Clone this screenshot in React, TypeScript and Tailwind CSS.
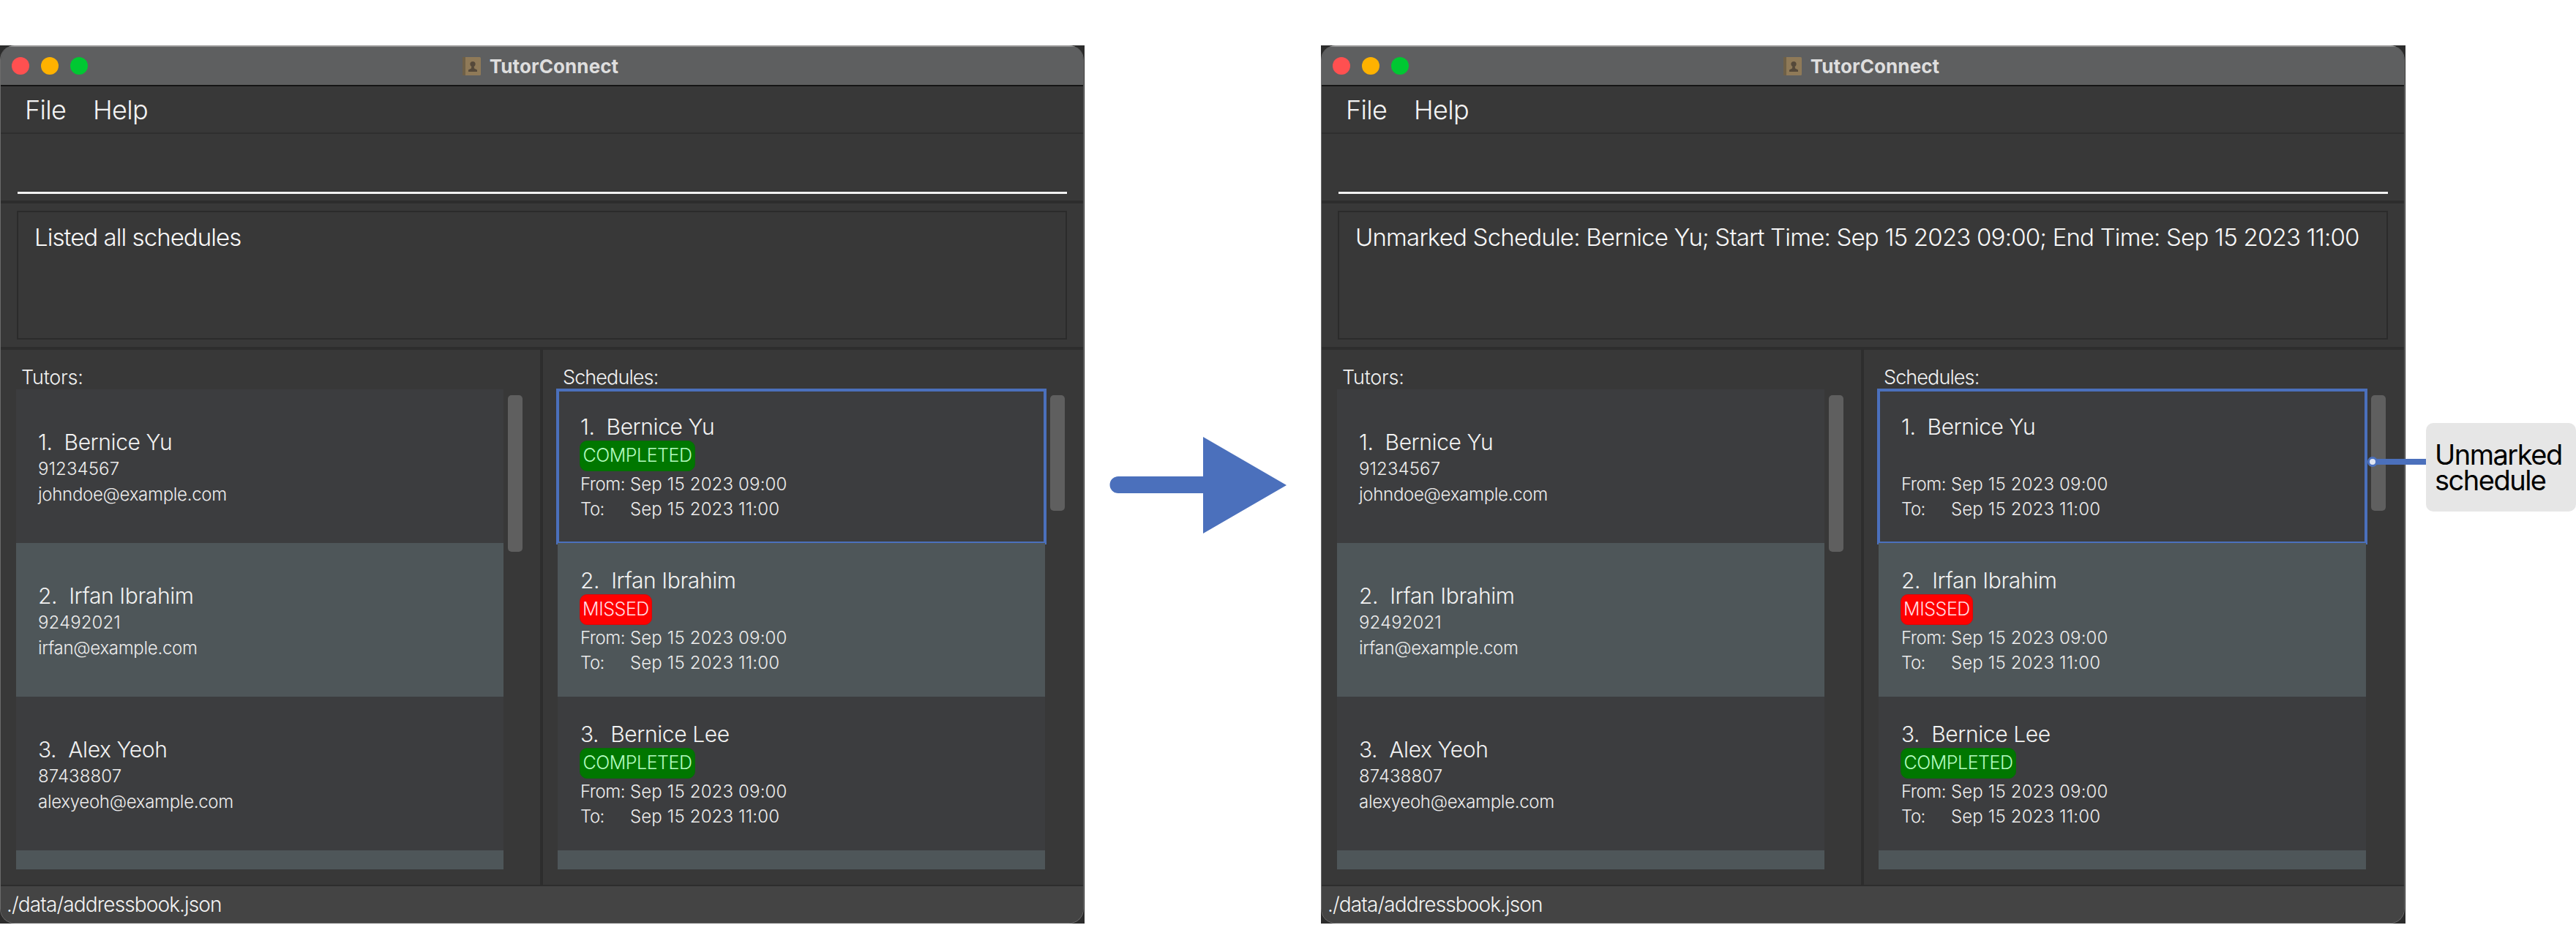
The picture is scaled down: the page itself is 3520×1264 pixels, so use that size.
const FONT = "font-['Inter','Liberation_Sans',sans-serif]";

type Tutor = { name: string; phone: string; email: string };
type Sched = { name: string; status: "COMPLETED" | "MISSED" | "" };

const tutors: Tutor[] = [
  { name: "1.\u00a0\u00a0Bernice Yu", phone: "91234567", email: "johndoe@example.com" },
  { name: "2.\u00a0\u00a0Irfan Ibrahim", phone: "92492021", email: "irfan@example.com" },
  { name: "3.\u00a0\u00a0Alex Yeoh", phone: "87438807", email: "alexyeoh@example.com" },
];

function Lights() {
  return (
    <div className="flex gap-4 pl-[15px]">
      <span className="w-6 h-6 rounded-full bg-[#ff5050]" />
      <span className="w-6 h-6 rounded-full bg-[#ffb200]" />
      <span className="w-6 h-6 rounded-full bg-[#00c832]" />
    </div>
  );
}

function AppIcon() {
  return (
    <svg width="25" height="25" viewBox="0 0 25 25" className="shrink-0">
      <rect width="25" height="25" rx="1.5" fill="#8f7a58" />
      <rect width="4" height="25" fill="#6f6047" />
      <circle cx="14" cy="9.5" r="3.6" fill="#55493a" />
      <path d="M12.5 12h3l.6 3.4 3.9 2.1V20H8v-2.5l3.9-2.1z" fill="#55493a" />
    </svg>
  );
}

function TutorCard({ t, i }: { t: Tutor; i: number }) {
  return (
    <div className={`h-[210px] shrink-0 pl-[30px] pt-[54px] ${i % 2 ? "bg-[#4e5659]" : "bg-[#3c3d3f]"}`}>
      <div className="h-9 text-[30px] leading-9 font-light tracking-[-0.4px] text-[#f2f2f2]">{t.name}</div>
      <div className="mt-[1px] h-[35px] text-[24px] leading-[35px] font-light tracking-[0.1px] text-[#ececec]">{t.phone}</div>
      <div className="h-[35px] text-[24px] leading-[35px] font-light tracking-[-0.3px] text-[#ececec]">{t.email}</div>
    </div>
  );
}

function SchedCard({ s, i, selected }: { s: Sched; i: number; selected: boolean }) {
  return (
    <div className={`relative h-[210px] shrink-0 pl-[31px] pt-[33px] ${i % 2 ? "bg-[#4e5659]" : "bg-[#3c3d3f]"}`}>
      <div className="h-9 text-[30px] leading-9 font-light tracking-[-0.4px] text-[#f2f2f2]">{s.name}</div>
      <div className="h-[42px] mt-[1px]">
        {s.status === "COMPLETED" && (
          <span className="inline-flex h-[42px] w-[158px] items-center justify-center rounded-[10px] -ml-[1px] border border-[#0a6a0a] bg-[#007700] text-[25px] font-light tracking-[-0.45px] text-[#b4fbc0]">
            COMPLETED
          </span>
        )}
        {s.status === "MISSED" && (
          <span className="inline-flex h-[42px] w-[99px] items-center justify-center rounded-[10px] -ml-[1px] border border-[#d80808] bg-[#ff0000] text-[25px] font-light tracking-[-0.45px] text-[#ffdce0]">
            MISSED
          </span>
        )}
      </div>
      <div className="mt-[1px] flex h-[34px] text-[24px] leading-[34px] font-light text-[#ececec]">
        <span className="w-[68px] tracking-[-0.5px]">From:</span>
        <span className="tracking-[0.15px]">Sep 15 2023 09:00</span>
      </div>
      <div className="flex h-[34px] text-[24px] leading-[34px] font-light text-[#ececec]">
        <span className="w-[68px] tracking-[-0.5px]">To:</span>
        <span className="tracking-[0.15px]">Sep 15 2023 11:00</span>
      </div>
      {selected && <div className="absolute -inset-x-[2px] -top-[1px] -bottom-[2px] border-4 border-[#4b70bc]" />}
    </div>
  );
}

function Window({ result, resultClass, firstStatus }: { result: string; resultClass: string; firstStatus: Sched["status"] }) {
  const scheds: Sched[] = [
    { name: "1.\u00a0\u00a0Bernice Yu", status: firstStatus },
    { name: "2.\u00a0\u00a0Irfan Ibrahim", status: "MISSED" },
    { name: "3.\u00a0\u00a0Bernice Lee", status: "COMPLETED" },
  ];
  return (
    <div className="w-[1482px] h-[1200px] shrink-0 bg-[#2c2c2c]">
      <div className="flex flex-col h-full w-[1481px] rounded-[20px] overflow-hidden border-x border-b border-[#6b6b6b] bg-[#383838]">
        <div className="relative flex h-14 shrink-0 items-center border-t-2 border-t-[#979797] border-b-2 border-b-[#151515] bg-[#5e5f60]">
          <Lights />
          <div className="absolute inset-x-0 top-0 flex h-full items-center justify-center gap-[12px] pr-[4px]">
            <AppIcon />
            <span className="text-[26px] font-bold tracking-[0.1px] text-[#dedede]">TutorConnect</span>
          </div>
        </div>

        <div className="flex h-[65px] shrink-0 items-center gap-[37px] border-b-2 border-[#2f2f2f] pl-[33px] text-[36px] font-light tracking-[-0.7px] text-[#f4f4f4]">
          <span>File</span>
          <span>Help</span>
        </div>

        <div className="h-[95px] shrink-0 border-b-4 border-[#2d2d2d] pl-[23px] pr-[22px] pt-[79px]">
          <div className="h-[3px] bg-[#f2f2f2]" />
        </div>

        <div className="h-[200px] shrink-0 border-b-4 border-[#2d2d2d] px-[22px] pt-[10px]">
          <div className="h-[176px] border-2 border-[#2b2b2b] pl-[22px] pt-[14px]">
            <div className={`text-[33px] leading-10 font-light text-[#f8f8f8] ${resultClass}`}>{result}</div>
          </div>
        </div>

        <div className="flex h-[731px] shrink-0">
          <div className="flex w-[741px] shrink-0 flex-col border-r-4 border-[#2d2d2d] pl-[21px]">
            <div className="h-[54px] pl-[7px] pt-[22px] text-[27px] leading-8 font-light tracking-[-0.2px] text-[#f2f2f2]">Tutors:</div>
            <div className="flex">
              <div className="flex h-[656px] w-[666px] flex-col bg-[#4e5659]">
                {tutors.map((t, i) => <TutorCard key={i} t={t} i={i} />)}
              </div>
              <div className="ml-[6px] mt-[8px] h-[214px] w-5 rounded-[5px] bg-[#5f5f5f]" />
            </div>
          </div>
          <div className="flex flex-1 flex-col pl-[20px]">
            <div className="h-[54px] pl-[7px] pt-[22px] text-[27px] leading-8 font-light tracking-[-0.9px] text-[#f2f2f2]">Schedules:</div>
            <div className="flex">
              <div className="flex h-[656px] w-[666px] flex-col bg-[#4e5659]">
                {scheds.map((s, i) => <SchedCard key={i} s={s} i={i} selected={i === 0} />)}
              </div>
              <div className="ml-[7px] mt-[8px] h-[158px] w-5 rounded-[5px] bg-[#5f5f5f]" />
            </div>
          </div>
        </div>

        <div className="flex flex-1 items-center border-t-2 border-[#2d2d2d] bg-[#444444] pl-[8px] text-[28px] font-light tracking-[-0.9px] text-[#f2f2f2]">
          ./data/addressbook.json
        </div>
      </div>
    </div>
  );
}

function Arrow() {
  return (
    <div className="w-[323px] shrink-0 pl-[34px] pt-[534px]">
      <svg width="244" height="134" viewBox="0 0 244 134">
        <path d="M12 55H128V1L242 67 128 133V78H12a11.5 11.5 0 0 1 0-23z" fill="#4b70bc" />
      </svg>
    </div>
  );
}

function Callout() {
  return (
    <div className="relative mt-[516px] ml-[28px] flex h-[121px] w-[205px] shrink-0 items-center rounded-[10px] bg-[#e6e6e6] pl-[12px] pr-[8px] text-[38px] leading-[35px] tracking-[-1.5px] text-black">
      <p>Unmarked schedule</p>
      <div className="absolute -left-[67px] top-[49px] h-2 w-[67px] bg-[#4b70bc]" />
      <div className="absolute -left-[80px] top-[46px] h-[14px] w-[14px] rounded-full border-[3px] border-[#4b70bc] bg-[#dfe5f2]" />
    </div>
  );
}

export default function App() {
  return (
    <div className={`flex h-[1264px] w-[3520px] items-start overflow-hidden bg-white pt-[62px] ${FONT}`}>
      <Window result="Listed all schedules" resultClass="tracking-[-0.95px]" firstStatus="COMPLETED" />
      <Arrow />
      <Window
        result="Unmarked Schedule: Bernice Yu; Start Time: Sep 15 2023 09:00; End Time: Sep 15 2023 11:00"
        resultClass="tracking-[-0.8px] whitespace-nowrap"
        firstStatus=""
      />
      <Callout />
    </div>
  );
}
